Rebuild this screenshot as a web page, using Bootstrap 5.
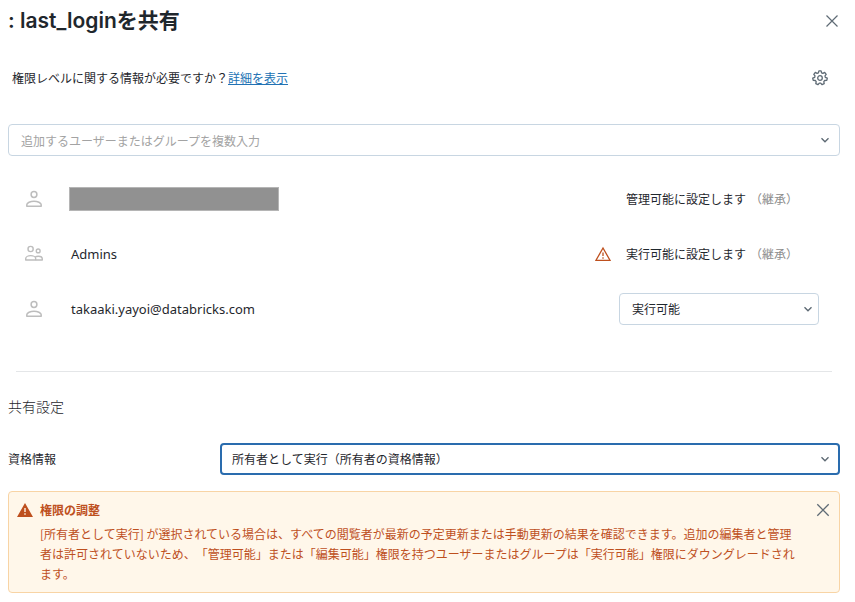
<!DOCTYPE html>
<html lang="ja">
<head>
<meta charset="utf-8">
<meta name="viewport" content="width=device-width, initial-scale=1">
<title>last_loginを共有</title>
<link href="https://cdn.jsdelivr.net/npm/bootstrap@5.3.0/dist/css/bootstrap.min.css" rel="stylesheet">
<style>
  body { font-family: "Noto Sans CJK JP", sans-serif; font-size: 12px; line-height: 20px; color: #1f272d; text-spacing-trim: space-all; }
  .share-dialog { padding: 0 15px 0 8px; }
  .dialog-head { min-height: 42px; }
  .dialog-title { font-family: Inter, "Noto Sans CJK JP", sans-serif; font-size: 21px; line-height: 28px; font-weight: 600; }
  .icon-btn { color: #5f6b75; line-height: 0; }
  .info-row { margin-top: 20px; min-height: 32px; padding: 0 12px 0 4px; }
  .info-row a { color: #2272b4; }
  .field { height: 32px; padding: 0 32px 0 12px; font-size: 12px; line-height: 20px; color: #1f272d; border: 1px solid #c8d6e2; border-radius: 4px;
    background-image: url("data:image/svg+xml,%3Csvg xmlns='http://www.w3.org/2000/svg' viewBox='0 0 10 10'%3E%3Cpath d='M1.5 3.3 5 6.8 8.5 3.3' fill='none' stroke='%235f6b75' stroke-width='1.4'/%3E%3C/svg%3E");
    background-size: 10px 10px; background-position: right 9px center; }
  .field::placeholder { color: #a3a3a3; opacity: 1; }
  .field-level { background-position: right 5px center; }
  .field-active { border: 2px solid #2a6cae; padding-left: 10px; background-position: right 8px center; }
  .search-row { margin-top: 30px; }
  .people { margin: 15px 0 0; }
  .person { min-height: 55px; padding: 0 21px 0 16px; }
  .person-icon { width: 47px; color: #bdbdbd; line-height: 0; }
  .person-name { font-family: "Noto Sans", "Noto Sans CJK JP", sans-serif; font-size: 13px; }
  .redacted { width: 210px; height: 24px; background: #919191; border: 1px solid #b5b5b5; margin-left: -2px; }
  .person-level { width: 200px; }
  .level-text { padding-left: 7px; }
  .inherited { color: #8c8c8c; }
  .warn-icon { color: #be501e; line-height: 0; }
  .divider { margin: 35px 8px 0; border-color: #e4e6e8; opacity: 1; }
  .section-title { margin: 24px 0 0; font-size: 14px; line-height: 20px; font-weight: 300; color: #1f272d; }
  .credentials { margin-top: 27px; }
  .credentials label { width: 212px; }
  .notice { margin-top: 16px; padding: 8px; background: #fff7ea; border: 1px solid #f8d4a5; border-radius: 4px; color: #be501e; }
  .notice-icon { margin: 2px 7px 0 0; }
  .notice-close { margin: 2px 0 0 12px; }
  .notice-title { font-weight: 700; }
  .notice-text { margin-top: 4px; }
</style>
</head>
<body>
<main class="share-dialog">
  <header class="dialog-head d-flex align-items-center justify-content-between">
    <h1 class="dialog-title m-0">: last_loginを共有</h1>
    <button type="button" class="btn p-0 border-0 icon-btn" aria-label="閉じる">
      <svg width="16" height="16" viewBox="0 0 16 16" fill="none" stroke="currentColor" stroke-width="1.2"><path d="M2.500 2.500l11 11M13.500 2.500l-11 11"/></svg>
    </button>
  </header>

  <div class="info-row d-flex align-items-center justify-content-between">
    <p class="m-0">権限レベルに関する情報が必要ですか？<a href="#">詳細を表示</a></p>
    <button type="button" class="btn p-0 border-0 icon-btn" aria-label="設定">
      <svg width="16" height="16" viewBox="0 0 16 16" fill="none" stroke="currentColor" stroke-width="1.3" stroke-linejoin="round"><circle cx="8" cy="8" r="2.300"/><path d="M6.900.8h2.200l.5 2 1.300.6 1.800-1 1.500 1.900-1.200 1.600.3 1.400 2 .9-.5 2.200-2.100.1-.9 1.100.4 2.100-2.100 1-1.400-1.600H7.300l-1.400 1.600-2.100-1 .4-2.100-.9-1.100-2.100-.1-.5-2.200 2-.9.3-1.400-1.200-1.600 1.500-1.900 1.800 1 1.300-.6z"/></svg>
    </button>
  </div>

  <div class="search-row">
    <input type="text" class="form-select field" placeholder="追加するユーザーまたはグループを複数入力" aria-label="追加するユーザーまたはグループ">
  </div>

  <ul class="people list-unstyled">
    <li class="person d-flex align-items-center">
      <span class="person-icon"><svg width="20" height="20" viewBox="0 0 20 20" fill="none" stroke="currentColor" stroke-width="1.500"><circle cx="10" cy="5.500" r="2.900"/><path d="M2.800 17.200v-1.400c0-2 3.600-3.600 7.200-3.600s7.200 1.600 7.200 3.600v1.400z" stroke-linejoin="round"/></svg></span>
      <span class="person-name flex-grow-1"><span class="redacted d-block"></span></span>
      <span class="person-level d-flex gap-1"><span class="level-text">管理可能に設定します</span><span class="inherited">（継承）</span></span>
    </li>
    <li class="person d-flex align-items-center">
      <span class="person-icon"><svg width="20" height="20" viewBox="0 0 20 20" fill="none" stroke="currentColor" stroke-width="1.400"><circle cx="6.600" cy="5" r="2.600"/><circle cx="14.200" cy="6.900" r="1.900"/><path d="M1.700 16v-1.300c0-1.700 2.300-3.100 5-3.100s5 1.400 5 3.100V16z" stroke-linejoin="round"/><path d="M11.700 16h6.600v-1c0-1.500-1.700-2.700-4-2.700-1.400 0-2.500.3-3.300.8" stroke-linejoin="round"/></svg></span>
      <span class="person-name flex-grow-1">Admins</span>
      <span class="warn-icon me-2"><svg width="16" height="16" viewBox="0 0 16 16" fill="none" stroke="currentColor" stroke-width="1.300"><path d="M8 2 15 14.300H1z"/><path d="M8 6.500v3.500M8 11.200v1.500"/></svg></span>
      <span class="person-level d-flex gap-1"><span class="level-text">実行可能に設定します</span><span class="inherited">（継承）</span></span>
    </li>
    <li class="person d-flex align-items-center">
      <span class="person-icon"><svg width="20" height="20" viewBox="0 0 20 20" fill="none" stroke="currentColor" stroke-width="1.500"><circle cx="10" cy="5.500" r="2.900"/><path d="M2.800 17.200v-1.400c0-2 3.600-3.600 7.200-3.600s7.200 1.600 7.200 3.600v1.400z" stroke-linejoin="round"/></svg></span>
      <label class="person-name flex-grow-1" for="level">takaaki.yayoi@databricks.com</label>
      <span class="person-level"><select id="level" class="form-select field field-level"><option>実行可能</option></select></span>
    </li>
  </ul>

  <hr class="divider">

  <h2 class="section-title">共有設定</h2>
  <div class="credentials d-flex align-items-center">
    <label for="credentials" class="flex-shrink-0">資格情報</label>
    <select id="credentials" class="form-select field field-active"><option>所有者として実行（所有者の資格情報）</option></select>
  </div>

  <div class="notice d-flex align-items-start" role="alert">
    <svg class="notice-icon flex-shrink-0" width="16" height="16" viewBox="0 0 16 16"><path fill="currentColor" fill-rule="evenodd" d="M8 1 16 15H0zM7.300 6v4h1.400V6zm0 5.300v1.500h1.400v-1.500z"/></svg>
    <div class="flex-grow-1">
      <div class="notice-title">権限の調整</div>
      <div class="notice-text">[所有者として実行] が選択されている場合は、すべての閲覧者が最新の予定更新または手動更新の結果を確認できます。追加の編集者と管理者は許可されていないため、「管理可能」または「編集可能」権限を持つユーザーまたはグループは「実行可能」権限にダウングレードされます。</div>
    </div>
    <button type="button" class="btn p-0 border-0 icon-btn notice-close" aria-label="閉じる">
      <svg width="16" height="16" viewBox="0 0 16 16" fill="none" stroke="currentColor" stroke-width="1.300"><path d="M2.300 2.300l11.400 11.400M13.700 2.300L2.300 13.700"/></svg>
    </button>
  </div>
</main>
<script src="https://cdn.jsdelivr.net/npm/bootstrap@5.3.0/dist/js/bootstrap.bundle.min.js"></script>
</body>
</html>
